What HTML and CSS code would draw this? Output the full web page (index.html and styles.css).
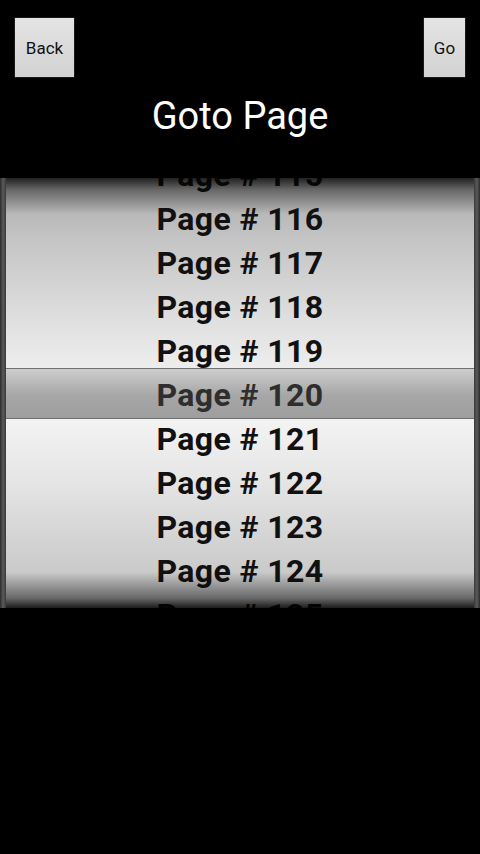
FILE: index.html
```html
<!DOCTYPE html>
<html>
<head>
<meta charset="utf-8">
<link rel="stylesheet" href="styles.css">
</head>
<body>
<div class="screen">
  <div class="topbar">
    <button class="btn btn-back">Back</button>
    <button class="btn btn-go">Go</button>
  </div>
  <h1 class="title">Goto Page</h1>
  <div class="wheel">
    <div class="wheel-inner">
      <div class="band"></div>
      <ul class="items">
        <li>Page # 115</li>
        <li>Page # 116</li>
        <li>Page # 117</li>
        <li>Page # 118</li>
        <li>Page # 119</li>
        <li class="current">Page # 120</li>
        <li>Page # 121</li>
        <li>Page # 122</li>
        <li>Page # 123</li>
        <li>Page # 124</li>
        <li>Page # 125</li>
      </ul>
      <div class="shade shade-top"></div>
      <div class="shade shade-bottom"></div>
    </div>
  </div>
</div>
</body>
</html>
```

FILE: styles.css
```css
html, body {
  margin: 0;
  padding: 0;
  background: #000;
}
.screen {
  width: 480px;
  height: 854px;
  background: #000;
  font-family: Roboto, "Noto Sans", sans-serif;
  overflow: hidden;
}
.topbar {
  display: flex;
  justify-content: space-between;
  padding: 17px 14px 0 14px;
}
.btn {
  height: 61px;
  border: 1px solid #1a1a1a;
  border-radius: 1px;
  background: linear-gradient(#e4e4e4, #d2d2d2);
  color: #111;
  font-family: Roboto, "Noto Sans", sans-serif;
  font-size: 17px;
  padding: 0;
  margin: 0;
}
.btn-back { width: 61px; }
.btn-go { width: 43px; }
.title {
  margin: 15px 0 0 0;
  height: 46px;
  line-height: 46px;
  text-align: center;
  color: #fff;
  font-weight: 400;
  font-size: 38px;
}
.wheel {
  margin-top: 39px;
  height: 430px;
  padding: 0 6px;
  background: linear-gradient(90deg, #2a2a2a 0, #5a5a5a 3px, #3a3a3a 6px, #3a3a3a 474px, #5a5a5a 477px, #2a2a2a 480px);
}
.wheel-inner {
  position: relative;
  height: 430px;
  overflow: hidden;
  background: linear-gradient(#a8a8a8 0, #c4c4c4 60px, #e2e2e2 150px, #ededed 190px, #f3f3f3 242px, #e6e6e6 300px, #c8c8c8 400px, #bcbcbc 430px);
}
.items {
  position: relative;
  list-style: none;
  margin: -25px 0 0 0;
  padding: 0;
}
.items li {
  height: 44px;
  line-height: 44px;
  text-align: center;
  font-weight: 700;
  font-size: 32px;
  color: #111;
  letter-spacing: 0.4px;
}
.items li.current { color: #2e2e2e; }
.band {
  position: absolute;
  left: 0;
  right: 0;
  top: 190px;
  height: 49px;
  border-top: 1px solid #707070;
  border-bottom: 1px solid #707070;
  background: linear-gradient(#cdcdcd, #a6a6a6 55%, #9e9e9e);
}
.shade {
  position: absolute;
  left: 0;
  right: 0;
  height: 36px;
}
.shade-top {
  top: 0;
  background: linear-gradient(rgba(0,0,0,0.8), rgba(0,0,0,0.4) 12px, rgba(0,0,0,0));
}
.shade-bottom {
  bottom: 0;
  background: linear-gradient(rgba(0,0,0,0), rgba(0,0,0,0.45) 26px, rgba(0,0,0,0.85));
}
```
